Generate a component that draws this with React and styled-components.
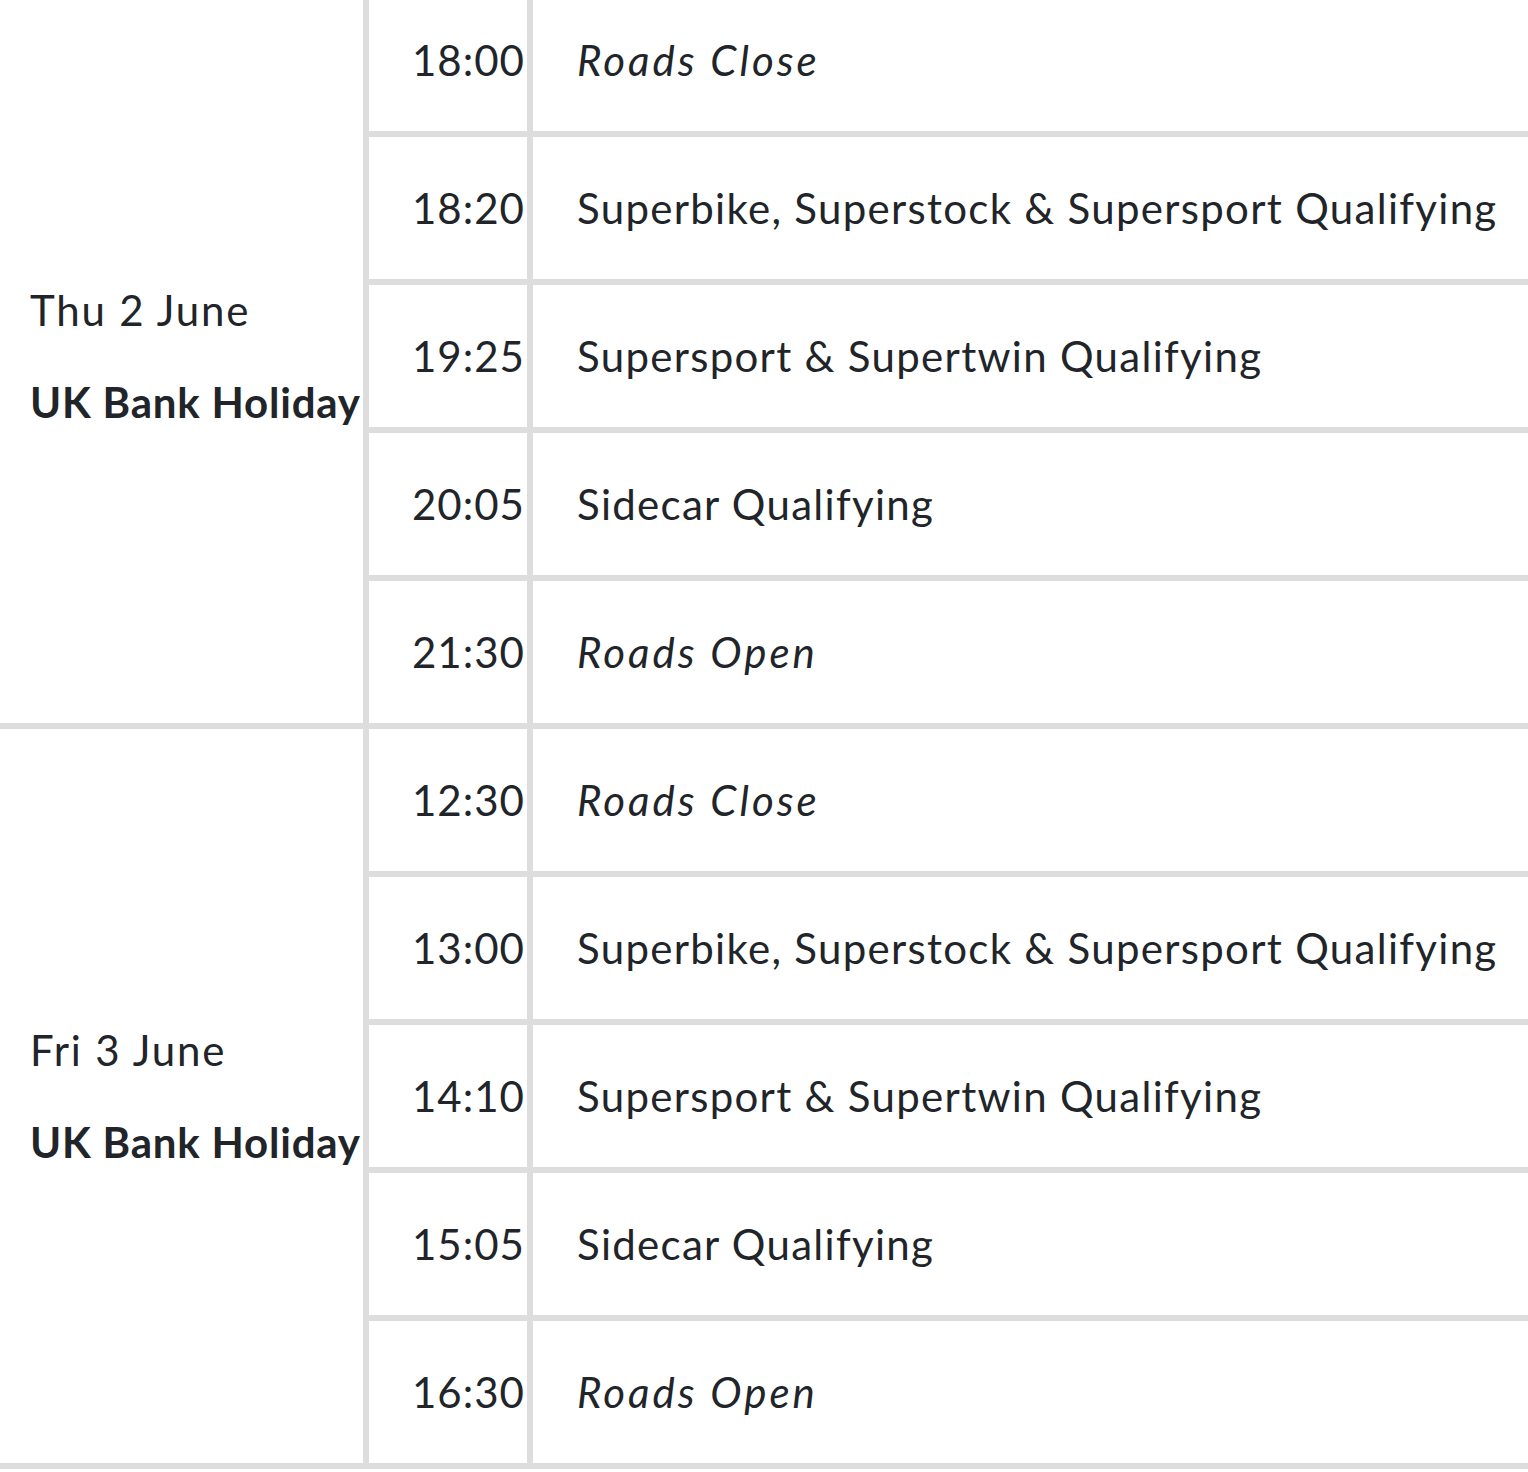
import React from "react";
import styled, { createGlobalStyle } from "styled-components";

const GlobalStyle = createGlobalStyle`
  html, body {
    margin: 0;
    padding: 0;
    background: #ffffff;
    overflow: hidden;
  }
  body {
    font-family: Lato, "Open Sans", sans-serif;
    color: #212529;
  }
`;

const Schedule = styled.table`
  width: 100%;
  margin-top: -11px;
  border-collapse: separate;
  border-spacing: 0;
  table-layout: fixed;
  font-size: 42px;
  line-height: 46px;
  letter-spacing: 1px;
`;

const Cell = styled.td`
  box-sizing: border-box;
  height: 148px;
  padding: 0;
  vertical-align: middle;
  white-space: nowrap;
  border-bottom: 6px solid #dddddd;
  border-right: ${(p) => (p.$last ? "none" : "6px solid #dddddd")};
`;

const DayCell = styled(Cell)`
  width: 369px;
  padding-left: 30px;
`;

const TimeCell = styled(Cell)`
  width: 164px;
  padding-left: 43px;
`;

const EventCell = styled(Cell)`
  padding-left: 44px;
  font-style: ${(p) => (p.$roads ? "italic" : "normal")};
  letter-spacing: ${(p) => (p.$roads ? "3px" : "1.3px")};
`;

const DayName = styled.div`
  font-weight: 400;
  letter-spacing: 1.8px;
`;

const Holiday = styled.div`
  margin-top: 46px;
  font-weight: 700;
  letter-spacing: 0.8px;
`;

const days = [
  {
    day: "Thu 2 June",
    note: "UK Bank Holiday",
    items: [
      ["18:00", "Roads Close", true],
      ["18:20", "Superbike, Superstock & Supersport Qualifying"],
      ["19:25", "Supersport & Supertwin Qualifying"],
      ["20:05", "Sidecar Qualifying"],
      ["21:30", "Roads Open", true],
    ],
  },
  {
    day: "Fri 3 June",
    note: "UK Bank Holiday",
    items: [
      ["12:30", "Roads Close", true],
      ["13:00", "Superbike, Superstock & Supersport Qualifying"],
      ["14:10", "Supersport & Supertwin Qualifying"],
      ["15:05", "Sidecar Qualifying"],
      ["16:30", "Roads Open", true],
    ],
  },
];

const App = () => {
  return (
    <>
      <GlobalStyle />
      <Schedule>
        <tbody>
          {days.map((d) =>
            d.items.map(([time, event, roads], i) => (
              <tr key={d.day + time}>
                {i === 0 && (
                  <DayCell rowSpan={d.items.length}>
                    <DayName>{d.day}</DayName>
                    <Holiday>{d.note}</Holiday>
                  </DayCell>
                )}
                <TimeCell>{time}</TimeCell>
                <EventCell $last $roads={roads}>
                  {event}
                </EventCell>
              </tr>
            ))
          )}
        </tbody>
      </Schedule>
    </>
  );
};

export default App;
